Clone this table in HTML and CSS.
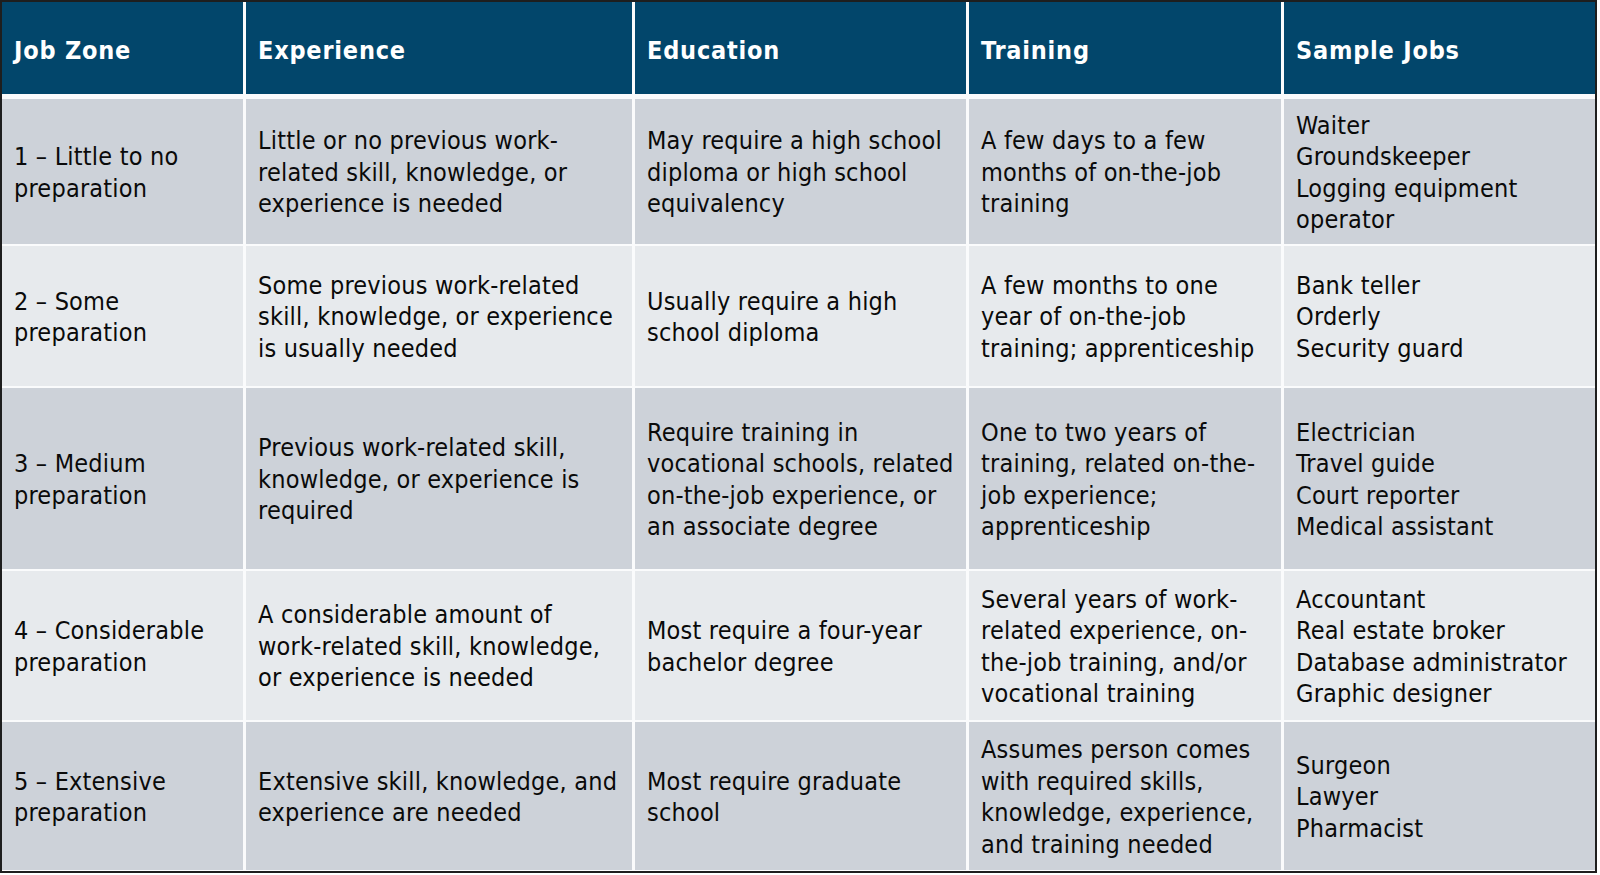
FILE: index.html
```html
<!DOCTYPE html>
<html lang="en">
<head>
<meta charset="utf-8">
<title>Job Zones</title>
<link rel="stylesheet" href="styles.css">
</head>
<body>
<div class="table">
  <div class="cell head">Job Zone</div>
  <div class="cell head">Experience</div>
  <div class="cell head">Education</div>
  <div class="cell head">Training</div>
  <div class="cell head">Sample Jobs</div>

  <div class="cell odd">1 – Little to no<br>preparation</div>
  <div class="cell odd">Little or no previous work-<br>related skill, knowledge, or<br>experience is needed</div>
  <div class="cell odd">May require a high school<br>diploma or high school<br>equivalency</div>
  <div class="cell odd">A few days to a few<br>months of on-the-job<br>training</div>
  <div class="cell odd">Waiter<br>Groundskeeper<br>Logging equipment<br>operator</div>

  <div class="cell even">2 – Some<br>preparation</div>
  <div class="cell even">Some previous work-related<br>skill, knowledge, or experience<br>is usually needed</div>
  <div class="cell even">Usually require a high<br>school diploma</div>
  <div class="cell even">A few months to one<br>year of on-the-job<br>training; apprenticeship</div>
  <div class="cell even">Bank teller<br>Orderly<br>Security guard</div>

  <div class="cell odd">3 – Medium<br>preparation</div>
  <div class="cell odd">Previous work-related skill,<br>knowledge, or experience is<br>required</div>
  <div class="cell odd">Require training in<br>vocational schools, related<br>on-the-job experience, or<br>an associate degree</div>
  <div class="cell odd">One to two years of<br>training, related on-the-<br>job experience;<br>apprenticeship</div>
  <div class="cell odd">Electrician<br>Travel guide<br>Court reporter<br>Medical assistant</div>

  <div class="cell even">4 – Considerable<br>preparation</div>
  <div class="cell even">A considerable amount of<br>work-related skill, knowledge,<br>or experience is needed</div>
  <div class="cell even">Most require a four-year<br>bachelor degree</div>
  <div class="cell even">Several years of work-<br>related experience, on-<br>the-job training, and/or<br>vocational training</div>
  <div class="cell even">Accountant<br>Real estate broker<br>Database administrator<br>Graphic designer</div>

  <div class="cell odd">5 – Extensive<br>preparation</div>
  <div class="cell odd">Extensive skill, knowledge, and<br>experience are needed</div>
  <div class="cell odd">Most require graduate<br>school</div>
  <div class="cell odd">Assumes person comes<br>with required skills,<br>knowledge, experience,<br>and training needed</div>
  <div class="cell odd">Surgeon<br>Lawyer<br>Pharmacist</div>
</div>
</body>
</html>
```
FILE: styles.css
```css
html, body {
  margin: 0;
  padding: 0;
  background: #ffffff;
}

.table {
  box-sizing: border-box;
  width: 1597px;
  height: 873px;
  border: 2px solid #1e1e1e;
  background: #fafbfc;
  display: grid;
  grid-template-columns: 241px 386px 331px 312px 311px;
  grid-template-rows: 95px 145px 140px 181px 149px 148px;
  column-gap: 3px;
  row-gap: 2px;
  font-family: "DejaVu Sans Condensed", "DejaVu Sans", sans-serif;
  font-size: 25px;
  letter-spacing: 0.2px;
  line-height: 31.5px;
  color: #0a0a0a;
}

.cell {
  display: flex;
  align-items: center;
  padding: 2px 8px 0 12px;
  white-space: nowrap;
}

.head {
  background: #02466b;
  color: #ffffff;
  font-weight: bold;
  letter-spacing: 0.8px;
  padding-top: 5px;
  margin-bottom: 3px;
}

.odd {
  background: #cdd2d9;
}

.even {
  background: #e7eaed;
}
```
